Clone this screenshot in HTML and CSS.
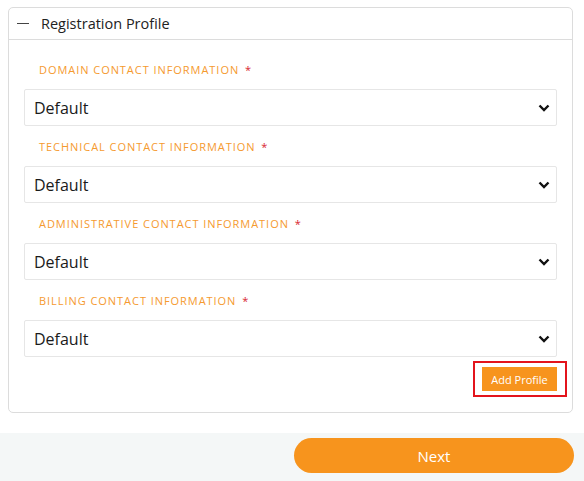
FILE: index.html
```html
<!DOCTYPE html>
<html>
<head>
<meta charset="utf-8">
<link rel="stylesheet" href="styles.css">
</head>
<body>
<div class="card">
  <div class="card-head">
    <span class="dash"></span>
    <span class="title">Registration Profile</span>
  </div>
  <div class="card-body">
    <div class="field">
      <div class="label">Domain Contact Information <span class="req">*</span></div>
      <div class="select"><span>Default</span><svg class="chev" width="12" height="8" viewBox="0 0 12 8"><path d="M1.5 1.5 L6 6 L10.5 1.5" fill="none" stroke="#111" stroke-width="2.4"/></svg></div>
    </div>
    <div class="field">
      <div class="label">Technical Contact Information <span class="req">*</span></div>
      <div class="select"><span>Default</span><svg class="chev" width="12" height="8" viewBox="0 0 12 8"><path d="M1.5 1.5 L6 6 L10.5 1.5" fill="none" stroke="#111" stroke-width="2.4"/></svg></div>
    </div>
    <div class="field">
      <div class="label">Administrative Contact Information <span class="req">*</span></div>
      <div class="select"><span>Default</span><svg class="chev" width="12" height="8" viewBox="0 0 12 8"><path d="M1.5 1.5 L6 6 L10.5 1.5" fill="none" stroke="#111" stroke-width="2.4"/></svg></div>
    </div>
    <div class="field">
      <div class="label">Billing Contact Information <span class="req">*</span></div>
      <div class="select"><span>Default</span><svg class="chev" width="12" height="8" viewBox="0 0 12 8"><path d="M1.5 1.5 L6 6 L10.5 1.5" fill="none" stroke="#111" stroke-width="2.4"/></svg></div>
    </div>
    <div class="actions">
      <div class="highlight"><button class="add-btn">Add Profile</button></div>
    </div>
  </div>
</div>
<div class="footer">
  <button class="next-btn">Next</button>
</div>
</body>
</html>
```
FILE: styles.css
```css
* { box-sizing: border-box; }
html, body { margin: 0; padding: 0; background: #fff; }
body {
  font-family: "Open Sans", "Liberation Sans", sans-serif;
  width: 584px;
  height: 481px;
  overflow: hidden;
}
.card {
  margin: 7px 11px 0 8px;
  border: 1px solid #dcdcdc;
  border-radius: 5px;
  background: #fff;
}
.card-head {
  height: 32px;
  border-bottom: 1px solid #dcdcdc;
  display: flex;
  align-items: center;
  padding-left: 8px;
}
.dash {
  display: block;
  width: 12px;
  height: 1px;
  background: #444;
  margin-right: 12px;
}
.title {
  font-size: 14.5px;
  color: #222;
  line-height: 20px;
}
.card-body {
  padding: 9px 15px 15px 15px;
}
.label {
  margin: 13px 0 11px 15px;
  line-height: 16px;
  font-size: 11px;
  letter-spacing: 0.95px;
  text-transform: uppercase;
  color: #f59a2f;
}
.req {
  color: #d8262f;
  margin-left: 2px;
}
.select {
  height: 37px;
  border: 1px solid #e6e6e6;
  border-radius: 2px;
  display: flex;
  align-items: center;
  justify-content: space-between;
  padding: 0 6px 0 9px;
  font-size: 16px;
  color: #1a1a1a;
}
.chev { display: block; }
.actions {
  display: flex;
  justify-content: flex-end;
  margin-top: 4px;
}
.highlight {
  border: 2px solid #e3141c;
  padding: 4px 8px 4px 7px;
  margin-right: -10px;
  display: flex;
}
.add-btn {
  border: none;
  background: #f7941d;
  color: #fff;
  font-family: "Open Sans", "Liberation Sans", sans-serif;
  font-size: 11px;
  height: 24px;
  width: 75px;
  padding: 0;
}
.footer {
  margin-top: 20px;
  height: 49px;
  background: #f4f7f7;
  display: flex;
  justify-content: flex-end;
  padding: 5px 10px 0 0;
}
.next-btn {
  width: 280px;
  height: 35px;
  border: none;
  border-radius: 18px;
  background: #f7941d;
  color: #fff;
  font-family: "Open Sans", "Liberation Sans", sans-serif;
  font-size: 15px;
}
```
